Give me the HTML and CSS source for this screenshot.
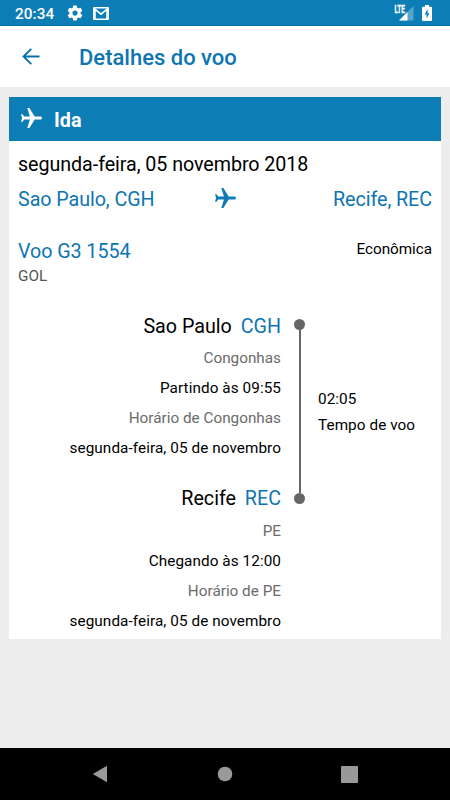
FILE: index.html
```html
<!DOCTYPE html>
<html lang="pt-BR">
<head>
    <meta charset="UTF-8">
    <meta name="viewport" content="width=device-width, initial-scale=1.0">
    <title>Detalhes do voo</title>
    <link rel="stylesheet" href="styles.css">
</head>
<body>
<svg class="sprite" width="0" height="0">
    <symbol id="plane" viewBox="2 2 20 20">
        <path d="M21 16v-2l-8-5V3.500c0-.83-.67-1.500-1.500-1.500S10 2.670 10 3.500V9l-8 5v2l8-2.500V19l-2 1.500V22l3.500-1 3.500 1v-1.500L13 19v-5.500l8 2.500z" transform="rotate(90 12 12)"/>
    </symbol>
</svg>

<div class="status-bar">
    <span class="clock">20:34</span>
    <svg class="gear" width="18" height="18" viewBox="0 0 24 24">
        <path d="M19.430 12.980c.04-.32.07-.64.07-.98s-.03-.66-.07-.98l2.110-1.650c.19-.15.24-.42.12-.64l-2-3.460c-.12-.22-.39-.3-.61-.22l-2.490 1c-.52-.4-1.080-.73-1.690-.98l-.38-2.650C14.460 2.180 14.250 2 14 2h-4c-.25 0-.46.18-.49.42l-.38 2.650c-.61.25-1.170.59-1.690.98l-2.490-1c-.23-.09-.49 0-.61.22l-2 3.460c-.13.22-.07.49.12.64l2.110 1.650c-.04.32-.07.65-.07.98s.03.66.07.98l-2.110 1.650c-.19.15-.24.42-.12.64l2 3.460c.12.22.39.3.61.22l2.490-1c.52.4 1.080.73 1.690.98l.38 2.650c.03.24.24.42.49.42h4c.25 0 .46-.18.49-.42l.38-2.650c.61-.25 1.170-.59 1.690-.98l2.490 1c.23.09.49 0 .61-.22l2-3.460c.12-.22.07-.49-.12-.64l-2.110-1.650zM12 15.500c-1.930 0-3.500-1.570-3.500-3.500s1.570-3.500 3.500-3.500 3.500 1.570 3.500 3.500-1.570 3.500-3.500 3.500z"/>
    </svg>
    <svg class="mail" width="16" height="13" viewBox="0 0 16 13">
        <rect x="0.750" y="0.750" width="14.500" height="11.500" rx="0.800"/>
        <path d="M2 12V2.300L8 7.200l6-4.900V12"/>
    </svg>
    <svg class="signal" width="20" height="18" viewBox="0 0 20 18">
        <path d="M19.500 2v14.500H5z" opacity="0.300"/>
        <path d="M13.500 8v8.500H5z"/>
        <text x="0.500" y="8.500" textLength="10.500" lengthAdjust="spacingAndGlyphs">LTE</text>
    </svg>
    <svg class="battery" width="10" height="17" viewBox="0 0 10 17">
        <path d="M3 0h4v1.700h2a1 1 0 0 1 1 1V15a1 1 0 0 1-1 1H1a1 1 0 0 1-1-1V2.700a1 1 0 0 1 1-1h2z"/>
        <path class="bolt" d="M5.600 4L2.600 9.400h2V13.500l2.900-5.300h-1.900z"/>
    </svg>
</div>

<header class="toolbar">
    <svg width="18" height="17" viewBox="0 0 18 17">
        <path d="M17.500 8.500H1.500M9.300 0.800L1.500 8.500l7.800 7.700"/>
    </svg>
    <h1>Detalhes do voo</h1>
</header>

<main>
    <section class="card">
        <div class="card-header">
            <svg width="21" height="21"><use href="#plane"/></svg>
            <h2>Ida</h2>
        </div>
        <div class="card-body">
            <p class="date">segunda-feira, 05 novembro 2018</p>
            <div class="route">
                <span>Sao Paulo, CGH</span>
                <svg width="21" height="21"><use href="#plane"/></svg>
                <span>Recife, REC</span>
            </div>

            <div class="flight">
                <div>
                    <p class="flight-number">Voo G3 1554</p>
                    <p class="airline">GOL</p>
                </div>
                <p class="cabin">Econômica</p>
            </div>

            <div class="itinerary">
                <div class="stops">
                    <div class="stop">
                        <h3>Sao Paulo <span>CGH</span></h3>
                        <p class="muted">Congonhas</p>
                        <p>Partindo às 09:55</p>
                        <p class="muted">Horário de Congonhas</p>
                        <p>segunda-feira, 05 de novembro</p>
                    </div>
                    <div class="stop">
                        <h3>Recife <span>REC</span></h3>
                        <p class="muted">PE</p>
                        <p>Chegando às 12:00</p>
                        <p class="muted">Horário de PE</p>
                        <p>segunda-feira, 05 de novembro</p>
                    </div>
                </div>
                <div class="timeline">
                    <span class="dot"></span>
                    <span class="line"></span>
                    <span class="dot"></span>
                </div>
                <div class="duration">
                    <p>02:05</p>
                    <p>Tempo de voo</p>
                </div>
            </div>
        </div>
    </section>
</main>

<nav class="nav-bar">
    <svg width="16" height="18" viewBox="0 0 16 18"><path d="M15 0.800v16.400L0.800 9z"/></svg>
    <svg width="16" height="16" viewBox="0 0 16 16"><circle cx="8" cy="8" r="7.300"/></svg>
    <svg width="17" height="17" viewBox="0 0 17 17"><rect width="17" height="17" rx="0.800"/></svg>
</nav>
</body>
</html>
```
FILE: styles.css
```css
* {
    box-sizing: border-box;
}

body {
    font-family: Roboto, sans-serif;
    font-size: 15.3px;
    letter-spacing: 0.07px;
    margin: 0;
    height: 800px;
    display: flex;
    flex-direction: column;
    color: #000;
    background-color: #ededed;
}

h1, h2, h3, p {
    margin: 0;
}

.sprite {
    position: absolute;
}

.status-bar {
    height: 26px;
    padding: 0 18px 0 15px;
    display: flex;
    align-items: center;
    background: #0d7db6;
    border-bottom: 1px solid #0670ab;
    color: #fff;
    fill: #fff;
}

.clock {
    font-weight: 500;
    line-height: 26px;
    padding-top: 2px;
}

.gear {
    margin-left: 12px;
}

.mail {
    margin-left: 9px;
    margin-top: 1px;
    fill: none;
    stroke: #fff;
    stroke-width: 1.6;
}

.signal {
    margin-left: auto;
}

.signal text {
    font-size: 10px;
    font-weight: 700;
    letter-spacing: 0;
    stroke: #fff;
    stroke-width: 0.3;
}

.battery {
    margin-left: 8px;
    margin-top: 1px;
}

.bolt {
    fill: #0d7db6;
}

.toolbar {
    height: 61px;
    padding: 0 22px;
    display: flex;
    align-items: center;
    gap: 39px;
    background: #fff;
}

.toolbar svg {
    fill: none;
    stroke: #0670ab;
    stroke-width: 1.8;
}

.toolbar h1 {
    font-size: 22px;
    font-weight: 500;
    letter-spacing: 0;
    color: #0d75b2;
    padding-top: 2px;
}

main {
    flex: 1;
    padding: 9.5px 9px 0;
}

.card {
    background: #fff;
}

.card-header {
    height: 44.5px;
    padding: 0 12px;
    display: flex;
    align-items: center;
    gap: 12px;
    background: #0d7db6;
    color: #fff;
    fill: #fff;
}

.card-header h2 {
    font-size: 19.7px;
    font-weight: 700;
    padding-top: 3px;
}

.card-body {
    padding: 6.5px 9px 3px;
}

.date,
.route,
.flight-number {
    font-size: 19.7px;
    letter-spacing: -0.06px;
}

.date {
    line-height: 34px;
}

.route {
    display: grid;
    grid-template-columns: 1fr auto 1fr;
    align-items: center;
    line-height: 36px;
    color: #0d75b2;
    fill: #0d7db6;
}

.route svg {
    margin-top: -2px;
}

.route span:last-child {
    text-align: right;
}

.flight {
    display: flex;
    justify-content: space-between;
    margin-top: 20px;
}

.flight-number {
    line-height: 28px;
    color: #0d75b2;
}

.airline {
    letter-spacing: 0;
    line-height: 20px;
    color: #555;
}

.cabin {
    letter-spacing: -0.05px;
    line-height: 22px;
}

.itinerary {
    display: flex;
    margin-top: 22px;
}

.stops {
    width: 263px;
    text-align: right;
}

.stop {
    margin-bottom: 17px;
    line-height: 30px;
}

.stop:last-child {
    margin-bottom: 0;
}

.stop h3 {
    font-size: 19.7px;
    font-weight: 400;
    letter-spacing: 0;
    line-height: 37px;
    margin-bottom: -1.5px;
}

.stop h3 span {
    margin-left: 4px;
    color: #0d75b2;
}

.muted {
    letter-spacing: 0;
    color: #6b6b6b;
}

.timeline {
    height: 185px;
    margin: 11px 13px 0;
    display: flex;
    flex-direction: column;
    align-items: center;
}

.dot {
    width: 11px;
    height: 11px;
    border-radius: 50%;
    background: #666;
}

.line {
    flex: 1;
    width: 2px;
    background: #666;
}

.duration {
    margin-top: 78px;
    line-height: 26px;
}

.nav-bar {
    height: 52px;
    padding: 0 92px;
    display: flex;
    align-items: center;
    justify-content: space-between;
    background: #000;
    fill: #999;
}
```
